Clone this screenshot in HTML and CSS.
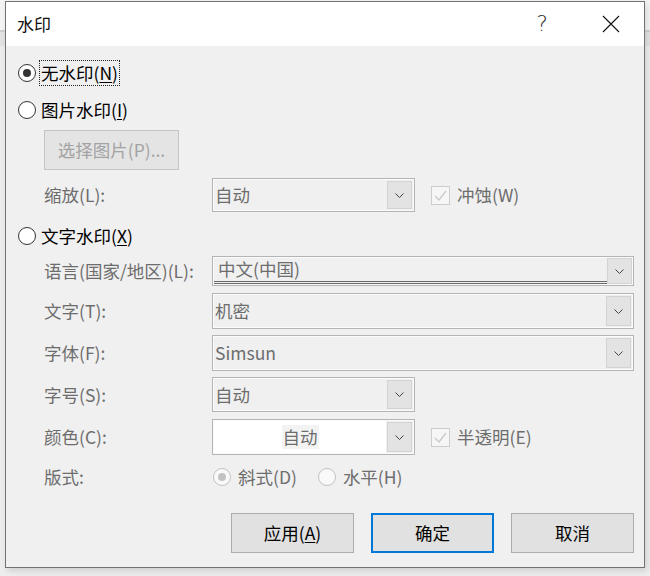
FILE: index.html
```html
<!DOCTYPE html>
<html lang="zh-CN">
<head>
<meta charset="utf-8">
<title>水印</title>
<link rel="stylesheet" href="styles.css">
</head>
<body>
<div class="dialog">
  <div class="titlebar">
    <span class="title">水印</span>
    <span class="help">?</span>
    <span class="close"><svg width="18" height="18" viewBox="0 0 18 18"><path d="M1 1L17 17M17 1L1 17" stroke="#111" stroke-width="1.1" fill="none"/></svg></span>
  </div>
  <div class="content">
    <div class="opt r1"><span class="radio on"></span><span class="lbl focus">无水印(<u>N</u>)</span></div>
    <div class="opt r2"><span class="radio"></span><span class="lbl">图片水印(<u>I</u>)</span></div>
    <div class="pick">选择图片(P)...</div>
    <div class="field f-scale">
      <span class="flabel">缩放(L):</span>
      <div class="select short"><span class="val">自动</span><span class="arrow"><svg width="9" height="5" viewBox="0 0 9 5"><polyline points="0.5,0.5 4.5,4.5 8.5,0.5" fill="none" stroke="#444" stroke-width="1"/></svg></span></div>
      <span class="check"><svg width="17" height="17" viewBox="0 0 17 17"><polyline points="3,9 7,13 14,4" fill="none" stroke="#c9c9c9" stroke-width="1.3"/></svg></span>
      <span class="ctext">冲蚀(W)</span>
    </div>
    <div class="opt r3"><span class="radio"></span><span class="lbl">文字水印(<u>X</u>)</span></div>
    <div class="field f-lang">
      <span class="flabel">语言(国家/地区)(L):</span>
      <div class="select long lang"><span class="val under">中文(中国)</span><span class="arrow"><svg width="9" height="5" viewBox="0 0 9 5"><polyline points="0.5,0.5 4.5,4.5 8.5,0.5" fill="none" stroke="#444" stroke-width="1"/></svg></span></div>
    </div>
    <div class="field f-text">
      <span class="flabel">文字(T):</span>
      <div class="select long"><span class="val">机密</span><span class="arrow"><svg width="9" height="5" viewBox="0 0 9 5"><polyline points="0.5,0.5 4.5,4.5 8.5,0.5" fill="none" stroke="#444" stroke-width="1"/></svg></span></div>
    </div>
    <div class="field f-font">
      <span class="flabel">字体(F):</span>
      <div class="select long"><span class="val">Simsun</span><span class="arrow"><svg width="9" height="5" viewBox="0 0 9 5"><polyline points="0.5,0.5 4.5,4.5 8.5,0.5" fill="none" stroke="#444" stroke-width="1"/></svg></span></div>
    </div>
    <div class="field f-size">
      <span class="flabel">字号(S):</span>
      <div class="select short"><span class="val">自动</span><span class="arrow"><svg width="9" height="5" viewBox="0 0 9 5"><polyline points="0.5,0.5 4.5,4.5 8.5,0.5" fill="none" stroke="#444" stroke-width="1"/></svg></span></div>
    </div>
    <div class="field f-color">
      <span class="flabel">颜色(C):</span>
      <div class="select short color"><span class="val center"><span class="hl">自动</span></span><span class="arrow"><svg width="9" height="5" viewBox="0 0 9 5"><polyline points="0.5,0.5 4.5,4.5 8.5,0.5" fill="none" stroke="#444" stroke-width="1"/></svg></span></div>
      <span class="check"><svg width="17" height="17" viewBox="0 0 17 17"><polyline points="3,9 7,13 14,4" fill="none" stroke="#c9c9c9" stroke-width="1.3"/></svg></span>
      <span class="ctext">半透明(E)</span>
    </div>
    <div class="field f-layout">
      <span class="flabel">版式:</span>
      <span class="radio dis on"></span><span class="rtext">斜式(D)</span>
      <span class="radio dis second"></span><span class="rtext">水平(H)</span>
    </div>
    <div class="buttons">
      <div class="btn">应用(<u>A</u>)</div>
      <div class="btn default">确定</div>
      <div class="btn">取消</div>
    </div>
  </div>
</div>
</body>
</html>
```
FILE: styles.css
```css
body {
  margin: 0;
  width: 650px;
  height: 576px;
  overflow: hidden;
  background: linear-gradient(#f4f4f4 0 30px, #cfcfcf 30px 32px, #e2e2e2 32px 46px, #ededed 46px);
  font-family: "Noto Sans CJK SC", "Noto Sans", sans-serif;
  font-size: 17.5px;
  color: #000;
}

.dialog {
  margin: 1px 0 0 5px;
  width: 640px;
  height: 567px;
  box-sizing: border-box;
  border: 1px solid #727272;
  background: #f0f0f0;
  box-shadow: 2px 3px 6px rgba(0, 0, 0, 0.12);
}

.titlebar {
  height: 44px;
  background: #fff;
  display: flex;
  align-items: center;
  padding: 0 10px 0 11px;
}

.title {
  flex: 1;
  font-size: 17px;
  line-height: 24px;
  color: #111;
}

.help {
  width: 20px;
  text-align: center;
  font-family: "DejaVu Sans", sans-serif;
  font-size: 22px;
  font-weight: 300;
  color: #333;
  margin-right: 36px;
  line-height: 26px;
}

.close {
  width: 46px;
  display: flex;
  justify-content: center;
  align-items: center;
}

.content {
  padding: 0 10px 0 12px;
}

.opt {
  height: 26px;
  display: flex;
  align-items: center;
  gap: 5px;
}

.r1 { margin-top: 14px; }
.r2 { margin-top: 11px; }
.r3 { margin-top: 11px; }

.lbl {
  line-height: 24px;
}

.focus {
  outline: 1px dotted #222;
  outline-offset: 0;
  padding: 0 1px;
  margin-left: -1px;
}

.radio {
  width: 18px;
  height: 18px;
  box-sizing: border-box;
  border: 1px solid #333;
  border-radius: 50%;
  background: #fff;
  display: flex;
  align-items: center;
  justify-content: center;
  flex: none;
}

.radio.on::after {
  content: "";
  width: 8px;
  height: 8px;
  border-radius: 50%;
  background: #333;
}

.radio.dis {
  border-color: #c2c2c2;
  background: #f9f9f9;
}

.radio.dis.on::after {
  background: #c2c2c2;
}

.pick {
  margin: 7px 0 0 26px;
  width: 135px;
  height: 40px;
  box-sizing: border-box;
  border: 1px solid #c4c4c4;
  background: #e4e4e4;
  color: #a3a3a3;
  display: flex;
  align-items: center;
  justify-content: center;
  line-height: 24px;
}

.field {
  display: flex;
  align-items: center;
  margin-left: 26px;
}

.flabel {
  width: 168px;
  flex: none;
  color: #6d6d6d;
  line-height: 24px;
}

.f-scale { margin-top: 8px; height: 34px; }
.f-lang { margin-top: 7px; height: 30px; }
.f-text { margin-top: 7px; height: 36px; }
.f-font { margin-top: 6px; height: 36px; }
.f-size { margin-top: 6px; height: 35px; }
.f-color { margin-top: 7px; height: 36px; }
.f-layout { margin-top: 9px; height: 26px; }

.select {
  height: 100%;
  box-sizing: border-box;
  border: 1px solid #b4b4b4;
  box-shadow: inset 0 0 0 1px #fbfbfb;
  background: #f0f0f0;
  display: flex;
  align-items: stretch;
  flex: none;
}

.select.short { width: 203px; }
.select.long { width: 422px; }

.val {
  flex: 1;
  display: flex;
  align-items: center;
  padding-left: 2px;
  color: #6d6d6d;
  line-height: 24px;
}

.lang .val {
  padding-left: 4px;
  margin: 0 0 1px 1px;
  border-bottom: 3px double #6a6a6a;
}

.lang .arrow {
  margin: 1px 1px 1px 0;
}

.color .val {
  background: #fff;
  margin: 1px 0 1px 1px;
}

.val.center {
  justify-content: center;
  padding-left: 0;
}

.hl {
  background: #f3f3f3;
  color: #6d6d6d;
  padding: 0 1px;
}

.arrow {
  width: 25px;
  margin: 2px 2px 2px 0;
  box-sizing: border-box;
  border: 1px solid #d3d3d3;
  background: #e3e3e3;
  display: flex;
  align-items: center;
  justify-content: center;
  flex: none;
}

.color .arrow {
  margin-left: 1px;
}

.check {
  width: 19px;
  height: 19px;
  box-sizing: border-box;
  border: 1px solid #cdcdcd;
  background: #f6f6f6;
  margin-left: 16px;
  display: flex;
  align-items: center;
  justify-content: center;
  flex: none;
}

.ctext {
  margin-left: 7px;
  color: #6d6d6d;
  line-height: 24px;
}

.f-layout .radio {
  margin-left: 1px;
}

.f-layout .radio.second {
  margin-left: 21px;
}

.rtext {
  margin-left: 7px;
  color: #6d6d6d;
  line-height: 24px;
}

.buttons {
  margin-top: 23px;
  display: flex;
  justify-content: flex-end;
  gap: 17px;
}

.btn {
  width: 123px;
  height: 40px;
  box-sizing: border-box;
  border: 1px solid #adadad;
  background: #e1e1e1;
  display: flex;
  align-items: center;
  justify-content: center;
  line-height: 24px;
  color: #000;
}

.btn.default {
  border: 2px solid #0078d7;
}

u {
  text-decoration-thickness: 1px;
  text-underline-offset: 2px;
}
```
